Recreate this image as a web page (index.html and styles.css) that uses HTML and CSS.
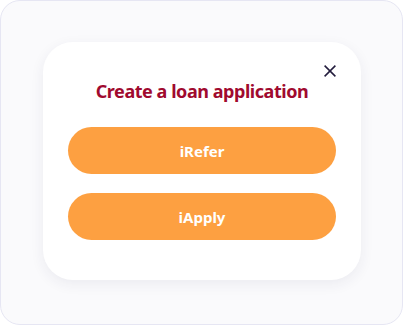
FILE: index.html
```html
<!DOCTYPE html>
<html>
<head>
<meta charset="utf-8">
<link rel="stylesheet" href="styles.css">
</head>
<body>
<div class="frame">
  <div class="card">
    <button class="close" aria-label="Close">
      <svg width="12" height="12" viewBox="0 0 12 12"><path d="M0.6 0.6L11.4 11.4M11.4 0.6L0.6 11.4" stroke="#231c3d" stroke-width="1.5" fill="none"/></svg>
    </button>
    <h1 class="title">Create a loan application</h1>
    <div class="actions">
      <button class="btn">iRefer</button>
      <button class="btn">iApply</button>
    </div>
  </div>
</div>
</body>
</html>
```
FILE: styles.css
```css
html, body { margin: 0; padding: 0; }
body { width: 403px; height: 325px; overflow: hidden; font-family: "Noto Sans", "Open Sans", sans-serif; }
.frame {
  box-sizing: border-box;
  width: 403px; height: 325px;
  border: 1px solid #e6e6f3;
  border-radius: 20px;
  background: #fafafc;
  padding: 41px 41px 0 42px;
}
.card {
  position: relative;
  box-sizing: border-box;
  width: 318px; height: 238px;
  background: #fff;
  border-radius: 30px;
  box-shadow: 0 4px 14px rgba(40, 40, 80, 0.07);
  padding: 35px 25px 0 25px;
}
.close {
  position: absolute;
  top: 23px; right: 25px;
  width: 12px; height: 12px;
  padding: 0; border: 0; background: none;
  display: flex;
}
.title {
  margin: 0;
  text-align: center;
  font-size: 18px;
  line-height: 28px;
  font-weight: 700;
  color: #a00a2f;
  letter-spacing: -0.45px;
}
.actions {
  margin-top: 22px;
  display: flex;
  flex-direction: column;
  gap: 19px;
}
.btn {
  height: 47px;
  border: 0;
  border-radius: 23.5px;
  background: #fda041;
  color: #fff;
  font-family: inherit;
  font-size: 15px;
  font-weight: 700;
}
```
